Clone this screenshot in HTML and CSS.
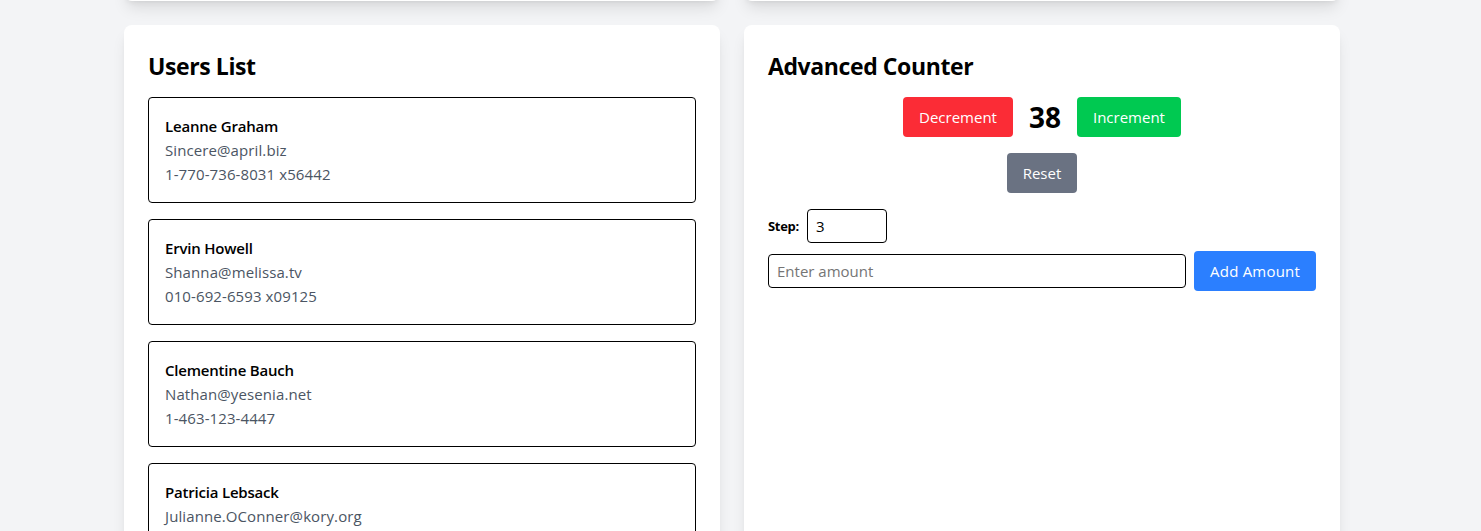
FILE: index.html
```html
<!DOCTYPE html>
<html lang="en">
<head>
<meta charset="utf-8">
<title>Dashboard</title>
<link rel="stylesheet" href="styles.css">
</head>
<body>
<div class="grid">
  <section class="card card-top"></section>
  <section class="card card-top"></section>

  <section class="card">
    <h2 class="title">Users List</h2>
    <ul class="users">
      <li class="user"><div class="name">Leanne Graham</div><div class="meta">Sincere@april.biz</div><div class="meta">1-770-736-8031 x56442</div></li>
      <li class="user"><div class="name">Ervin Howell</div><div class="meta">Shanna@melissa.tv</div><div class="meta">010-692-6593 x09125</div></li>
      <li class="user"><div class="name">Clementine Bauch</div><div class="meta">Nathan@yesenia.net</div><div class="meta">1-463-123-4447</div></li>
      <li class="user"><div class="name">Patricia Lebsack</div><div class="meta">Julianne.OConner@kory.org</div><div class="meta">493-170-9623 x156</div></li>
      <li class="user"><div class="name">Chelsey Dietrich</div><div class="meta">Lucio_Hettinger@annie.ca</div><div class="meta">(254)954-1289</div></li>
    </ul>
  </section>

  <section class="card">
    <h2 class="title">Advanced Counter</h2>
    <div class="counter-row">
      <button class="btn btn-red">Decrement</button>
      <span class="count">38</span>
      <button class="btn btn-green">Increment</button>
    </div>
    <div class="reset-row">
      <button class="btn btn-gray">Reset</button>
    </div>
    <div class="step-row">
      <label class="step-label" for="step">Step:</label>
      <input class="step-input" id="step" type="text" value="3">
    </div>
    <div class="amount-row">
      <input class="amount-input" type="text" placeholder="Enter amount">
      <button class="btn btn-blue">Add Amount</button>
    </div>
  </section>
</div>
</body>
</html>
```

FILE: styles.css
```css
* { box-sizing: border-box; }
html, body { margin: 0; padding: 0; }
body {
  background: #f3f4f6;
  font-family: "Open Sans", "Noto Sans", sans-serif;
  color: #000;
  overflow: hidden;
}
.grid {
  width: 1216px;
  margin-left: 124px;
  margin-top: -199px;
  display: grid;
  grid-template-columns: 1fr 1fr;
  gap: 24px;
  align-items: stretch;
}
.card {
  background: #fff;
  border-radius: 8px;
  box-shadow: 0 10px 15px -3px rgba(0,0,0,0.1), 0 4px 6px -4px rgba(0,0,0,0.1);
  padding: 24px;
  min-height: 620px;
}
.card-top { min-height: 0; height: 200px; }
.title {
  margin: 0 0 15px;
  padding-top: 1px;
  font-size: 23px;
  line-height: 32px;
  font-weight: 700;
  letter-spacing: -0.4px;
}
.users { list-style: none; margin: 0; padding: 0; display: flex; flex-direction: column; gap: 16px; }
.user {
  border: 1px solid #000;
  border-radius: 4px;
  padding: 16px;
  font-size: 15px;
  line-height: 24px;
}
.name { font-weight: 600; letter-spacing: -0.2px; }
.meta { color: #4b5563; letter-spacing: 0.1px; }

.btn {
  border: 0;
  border-radius: 4px;
  padding: 8px 16px;
  font-family: inherit;
  font-size: 15px;
  line-height: 24px;
  color: #fff;
  cursor: pointer;
}
.btn-red { background: #fb2c36; }
.btn-green { background: #00c951; }
.btn-gray { background: #6a7282; }
.btn-blue { background: #2b7fff; letter-spacing: 0.2px; }

.counter-row { display: flex; justify-content: center; align-items: center; gap: 16px; }
.count { font-size: 28px; line-height: 36px; font-weight: 700; }
.reset-row { display: flex; justify-content: center; margin-top: 16px; }
.step-row { display: flex; align-items: center; gap: 8px; margin-top: 16px; }
.step-label { font-size: 13px; font-weight: 700; letter-spacing: -0.3px; }
.step-input, .amount-input {
  border: 1px solid #000;
  border-radius: 4px;
  padding: 4px 8px;
  font-family: inherit;
  font-size: 15px;
  line-height: 24px;
  height: 34px;
  color: #000;
  background: #fff;
  outline: none;
}
.step-input { width: 80px; }
.amount-row { display: flex; align-items: center; gap: 8px; margin-top: 8px; }
.amount-input { flex: 1; min-width: 0; }
.amount-input::placeholder { color: #757575; }
```
